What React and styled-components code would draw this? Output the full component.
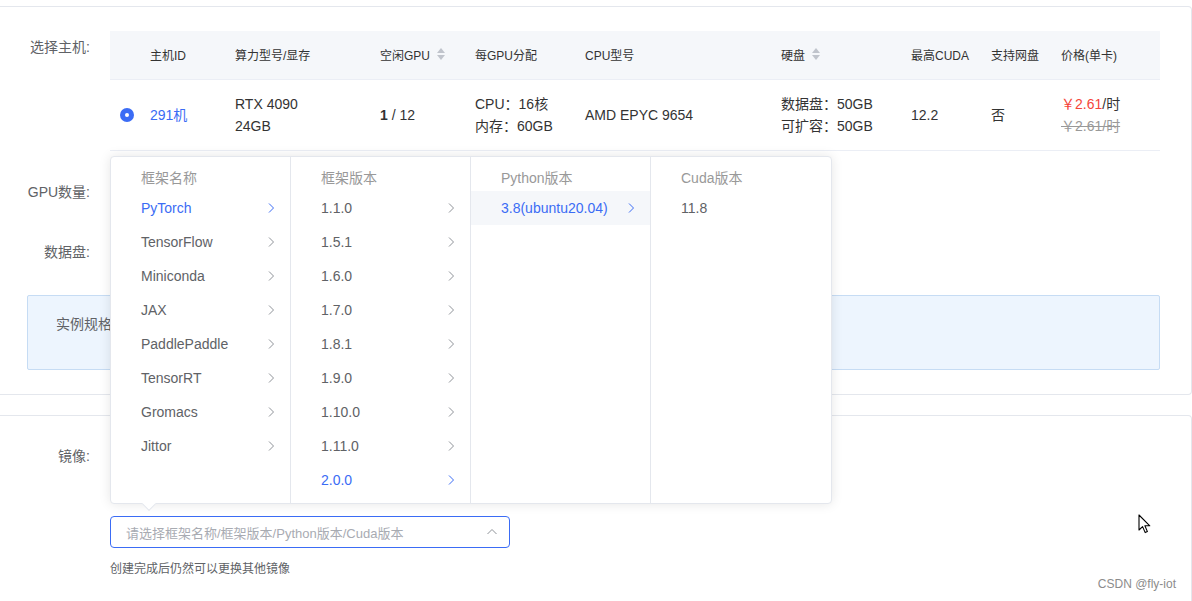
import React from 'react';
import styled, { createGlobalStyle } from 'styled-components';

const BLUE = '#3b6cf5';
const TEXT = '#333333';
const REGULAR = '#606266';
const BORDER = '#e4e7ed';

const GlobalStyle = createGlobalStyle`
  html, body {
    margin: 0;
    padding: 0;
    background: #ffffff;
  }
  body {
    font-family: "Liberation Sans", Arial, "Noto Sans CJK SC", sans-serif;
    color: ${TEXT};
  }
  * {
    box-sizing: border-box;
  }
`;

// table columns: radio, id, gpu, free, per-gpu, cpu, disk, cuda, netdisk, price
const COLUMNS = '30px 85px 145px 95px 110px 196px 130px 80px 70px 109px';

const FRAMEWORKS = ['PyTorch', 'TensorFlow', 'Miniconda', 'JAX', 'PaddlePaddle', 'TensorRT', 'Gromacs', 'Jittor'];
const VERSIONS = ['1.1.0', '1.5.1', '1.6.0', '1.7.0', '1.8.1', '1.9.0', '1.10.0', '1.11.0', '2.0.0'];

const menus = [
  { title: '框架名称', items: FRAMEWORKS, active: 'PyTorch', arrow: true },
  { title: '框架版本', items: VERSIONS, active: '2.0.0', arrow: true },
  { title: 'Python版本', items: ['3.8(ubuntu20.04)'], active: '3.8(ubuntu20.04)', hovered: '3.8(ubuntu20.04)', arrow: true },
  { title: 'Cuda版本', items: ['11.8'], arrow: false },
];

const Chevron = ({ dir = 'right' }) => (
  <svg width="12" height="12" viewBox="0 0 12 12" fill="none">
    {dir === 'right' ? (
      <path d="M4 1.5 L8.5 6 L4 10.5" stroke="currentColor" strokeWidth="1" />
    ) : (
      <path d="M1.5 8 L6 3.5 L10.5 8" stroke="currentColor" strokeWidth="1" />
    )}
  </svg>
);

const SortIcon = () => (
  <svg width="10" height="14" viewBox="0 0 10 14">
    <path d="M5 1 L9 6 L1 6 Z" fill="#c0c4cc" />
    <path d="M5 13 L9 8 L1 8 Z" fill="#c0c4cc" />
  </svg>
);

const MouseCursor = () => (
  <svg width="14" height="21" viewBox="0 0 14 21">
    <path
      d="M1 1 L1 16 L4.6 12.6 L7.2 18.6 L9.4 17.6 L6.9 11.8 L11.8 11.8 Z"
      fill="#ffffff"
      stroke="#000000"
      strokeWidth="1.1"
      strokeLinejoin="round"
    />
  </svg>
);

const App = () => {
  return (
    <Page>
      <GlobalStyle />

      <Card $top={6}>
        <FormItem $gap={25}>
          <Label>选择主机:</Label>
          <Table>
            <HeadRow>
              <HeadCell />
              <HeadCell>主机ID</HeadCell>
              <HeadCell>算力型号/显存</HeadCell>
              <HeadCell>
                空闲GPU <SortIcon />
              </HeadCell>
              <HeadCell>每GPU分配</HeadCell>
              <HeadCell>CPU型号</HeadCell>
              <HeadCell>
                硬盘 <SortIcon />
              </HeadCell>
              <HeadCell>最高CUDA</HeadCell>
              <HeadCell>支持网盘</HeadCell>
              <HeadCell>价格(单卡)</HeadCell>
            </HeadRow>
            <BodyRow>
              <Cell>
                <Radio />
              </Cell>
              <Cell>
                <HostLink>291机</HostLink>
              </Cell>
              <Cell>
                <Line>RTX 4090</Line>
                <Line>24GB</Line>
              </Cell>
              <Cell>
                <strong>1</strong>&nbsp;/ 12
              </Cell>
              <Cell>
                <Line>CPU：16核</Line>
                <Line>内存：60GB</Line>
              </Cell>
              <Cell>AMD EPYC 9654</Cell>
              <Cell>
                <Line>数据盘：50GB</Line>
                <Line>可扩容：50GB</Line>
              </Cell>
              <Cell>12.2</Cell>
              <Cell>否</Cell>
              <Cell>
                <Line>
                  <Price>￥2.61</Price>/时
                </Line>
                <OldPrice>￥2.61/时</OldPrice>
              </Cell>
            </BodyRow>
          </Table>
        </FormItem>

        <FormItem $gap={28}>
          <Label>GPU数量:</Label>
          <Field />
        </FormItem>

        <FormItem $gap={27}>
          <Label>数据盘:</Label>
          <Field />
        </FormItem>

        <SpecBox>实例规格</SpecBox>
      </Card>

      <Card $top={20}>
        <FormItem $gap={0}>
          <Label>镜像:</Label>
          <ImageField>
            <SourceRow />
            <Cascader>
              <Popper>
                {menus.map((menu) => (
                  <Menu key={menu.title}>
                    <MenuTitle>{menu.title}</MenuTitle>
                    {menu.items.map((item) => (
                      <MenuItem
                        key={item}
                        $active={item === menu.active}
                        $hovered={item === menu.hovered}
                      >
                        <span>{item}</span>
                        {menu.arrow && (
                          <ArrowSlot $active={item === menu.active}>
                            <Chevron />
                          </ArrowSlot>
                        )}
                      </MenuItem>
                    ))}
                  </Menu>
                ))}
                <PopperArrow />
              </Popper>
              <CascaderInput>
                <Placeholder>请选择框架名称/框架版本/Python版本/Cuda版本</Placeholder>
                <ArrowSlot>
                  <Chevron dir="up" />
                </ArrowSlot>
              </CascaderInput>
            </Cascader>
            <Hint>创建完成后仍然可以更换其他镜像</Hint>
          </ImageField>
        </FormItem>
      </Card>

      <Cursor>
        <MouseCursor />
      </Cursor>
      <Watermark>CSDN @fly-iot</Watermark>
    </Page>
  );
};

const Page = styled.div`
  position: relative;
  width: 1192px;
  height: 601px;
  overflow: hidden;
  background: #ffffff;
`;

const Card = styled.section`
  margin-top: ${(p) => p.$top}px;
  width: 1192px;
  border: 1px solid ${BORDER};
  border-left: none;
  border-radius: 0 4px 4px 0;
  padding: 24px 31px 24px 27px;
`;

const FormItem = styled.div`
  display: flex;
  align-items: flex-start;
  margin-bottom: ${(p) => p.$gap}px;
`;

const Label = styled.label`
  flex: 0 0 83px;
  display: flex;
  justify-content: flex-end;
  padding-right: 20px;
  font-size: 14px;
  line-height: 32px;
  color: ${REGULAR};
  white-space: nowrap;
`;

const Field = styled.div`
  flex: 1;
  height: 32px;
`;

const Table = styled.div`
  width: 1050px;
  font-size: 14px;
  color: ${TEXT};
`;

const HeadRow = styled.div`
  display: grid;
  grid-template-columns: ${COLUMNS};
  height: 49px;
  padding-bottom: 2px;
  background: #f5f7fa;
  border-bottom: 1px solid #ebeef5;
`;

const HeadCell = styled.div`
  display: flex;
  align-items: center;
  gap: 2px;
  padding-left: 10px;
  font-size: 12px;
  color: ${TEXT};
  white-space: nowrap;

  svg {
    margin-left: 4px;
  }
`;

const BodyRow = styled.div`
  display: grid;
  grid-template-columns: ${COLUMNS};
  height: 71px;
  border-bottom: 1px solid #ebeef5;
`;

const Cell = styled.div`
  display: flex;
  flex-direction: column;
  justify-content: center;
  padding-left: 10px;
  line-height: 22px;
  white-space: nowrap;

  strong {
    font-weight: 700;
  }
  &:nth-child(4) {
    flex-direction: row;
    align-items: center;
    justify-content: flex-start;
  }
`;

const Line = styled.div``;

const Radio = styled.span`
  display: block;
  width: 14px;
  height: 14px;
  border-radius: 50%;
  background: ${BLUE};
  position: relative;

  &::after {
    content: '';
    position: absolute;
    left: 5px;
    top: 5px;
    width: 4px;
    height: 4px;
    border-radius: 50%;
    background: #ffffff;
  }
`;

const HostLink = styled.span`
  color: ${BLUE};
`;

const Price = styled.span`
  color: #f5453a;
`;

const OldPrice = styled.div`
  color: #999999;
  text-decoration: line-through;
`;

const SpecBox = styled.div`
  height: 75px;
  padding: 17px 28px;
  background: #edf5fe;
  border: 1px solid #c6dcf4;
  border-radius: 2px;
  font-size: 14px;
  color: ${REGULAR};
`;

const ImageField = styled.div`
  flex: 1;
  display: flex;
  flex-direction: column;
  align-items: flex-start;
`;

const SourceRow = styled.div`
  height: 32px;
  margin-bottom: 44px;
`;

const Cascader = styled.div`
  position: relative;
  width: 400px;
`;

const CascaderInput = styled.div`
  display: flex;
  align-items: center;
  justify-content: space-between;
  height: 32px;
  padding: 0 11px 0 15px;
  border: 1px solid ${BLUE};
  border-radius: 4px;
  color: #a8abb2;
`;

const Placeholder = styled.span`
  font-size: 13px;
  color: #a8abb2;
`;

const Popper = styled.div`
  position: absolute;
  left: 0;
  bottom: calc(100% + 12px);
  z-index: 10;
  display: flex;
  background: #ffffff;
  border: 1px solid ${BORDER};
  border-radius: 4px;
  box-shadow: 0 0 12px rgba(0, 0, 0, 0.1);
`;

const PopperArrow = styled.span`
  position: absolute;
  left: 33px;
  bottom: -6px;
  width: 10px;
  height: 10px;
  background: #ffffff;
  border-right: 1px solid ${BORDER};
  border-bottom: 1px solid ${BORDER};
  transform: rotate(45deg);
`;

const Menu = styled.div`
  width: 180px;
  height: 346px;
  padding: 8px 0 6px;
  border-right: 1px solid ${BORDER};

  &:last-of-type {
    border-right: none;
  }
`;

const MenuTitle = styled.div`
  height: 26px;
  line-height: 26px;
  padding-left: 30px;
  font-size: 14px;
  color: #999999;
`;

const MenuItem = styled.div`
  display: flex;
  align-items: center;
  justify-content: space-between;
  height: 34px;
  padding: 0 13px 0 30px;
  font-size: 14px;
  color: ${(p) => (p.$active ? BLUE : REGULAR)};
  background: ${(p) => (p.$hovered ? '#f5f7fa' : 'transparent')};
  white-space: nowrap;
`;

const ArrowSlot = styled.span`
  display: flex;
  color: ${(p) => (p.$active ? BLUE : '#8f9399')};
`;

const Hint = styled.div`
  margin-top: 11px;
  font-size: 12px;
  line-height: 20px;
  color: ${REGULAR};
`;

const Cursor = styled.div`
  position: absolute;
  left: 1138px;
  top: 514px;
  display: flex;
`;

const Watermark = styled.div`
  position: absolute;
  right: 16px;
  top: 576px;
  font-size: 12px;
  line-height: 16px;
  color: #8c8c8c;
`;

export default App;
